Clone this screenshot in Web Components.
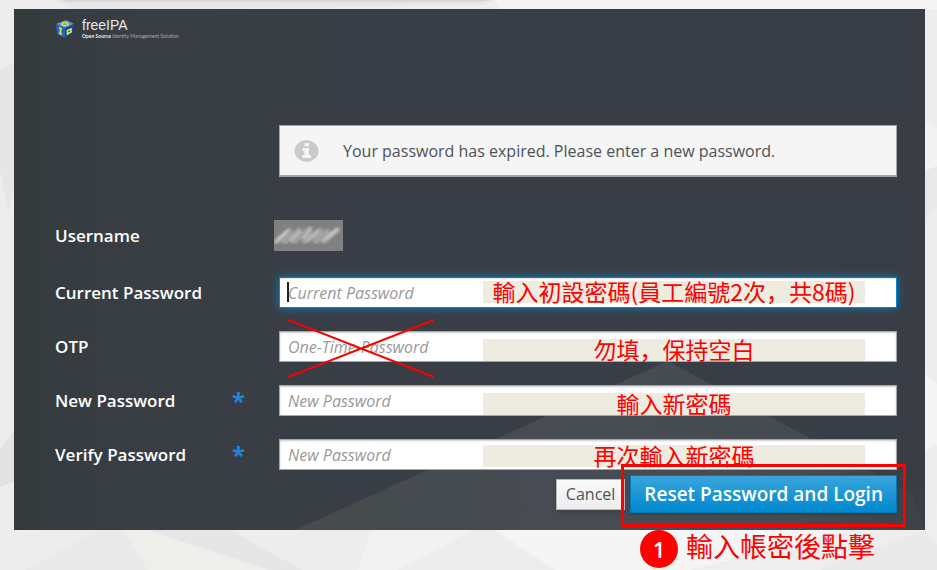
<!DOCTYPE html>
<html lang="zh-Hant">
<head>
<meta charset="utf-8">
<meta name="viewport" content="width=device-width, initial-scale=1">
<title>freeIPA</title>
<style>
  html, body { margin: 0; min-height: 100%; }
  body {
    background: #ececec;
    font-family: "Open Sans", "Noto Sans CJK SC", sans-serif;
    font-size: 16px;
    line-height: 24px;
    color: #fff;
    --red: #fe0000;
    --blue: #0088ce;
  }
</style>
</head>
<body>
<ipa-page>
  <ipa-panel>
    <ipa-logo></ipa-logo>
    <ipa-alert>Your password has expired. Please enter a new password.</ipa-alert>
    <ipa-user label="Username"></ipa-user>
    <ipa-field lang="zh-Hans" label="Current Password" hint="Current Password" active level="high">輸入初設密碼(員工編號2次，共8碼)</ipa-field>
    <ipa-field lang="zh-Hans" label="OTP" hint="One-Time-Password" crossed level="low">勿填，保持空白</ipa-field>
    <ipa-field lang="zh-Hans" label="New Password" hint="New Password" required level="low">輸入新密碼</ipa-field>
    <ipa-field lang="zh-Hans" label="Verify Password" hint="New Password" required>再次輸入新密碼</ipa-field>
    <ipa-actions></ipa-actions>
  </ipa-panel>
  <step-note lang="zh-Hans" number="1">輸入帳密後點擊</step-note>
</ipa-page>

<script>
const define = (name, render) => customElements.define(name, class extends HTMLElement {
  connectedCallback() {
    if (this.shadowRoot) return;
    this.attachShadow({ mode: "open" }).innerHTML = render(this);
  }
});

define("ipa-page", () => `
  <style>
    :host { display: grid; min-height: 100vh; }
    svg, main { grid-area: 1 / 1; }
    svg { width: 100%; height: 100%; min-height: 0; }
    main { z-index: 1; display: flex; flex-direction: column; padding: 9px 12px 0 14px; }
  </style>
  <svg viewBox="0 0 937 570" preserveAspectRatio="none" aria-hidden="true">
    <defs><linearGradient id="s" x2="0" y2="1"><stop stop-color="#d2d2d2"/><stop offset="1" stop-color="#e6e6e6"/></linearGradient></defs>
    <path fill="#ededed" d="M0 0H937V570H0z"/>
    <path fill="#e7e7e7" d="M55 0H495L480 5L200 9H70z"/>
    <path fill="url(#s)" d="M60 0H490L480 3H70z"/>
    <path fill="#f4f4f4" d="M495 0H937V9H500z"/>
    <path fill="#e6e6e6" d="M0 70L14 62V190L8 212L0 170z"/>
    <path fill="#f3f3f3" d="M925 121L937 128V166L925 171z"/>
    <path fill="#e9e9e9" d="M925 171L937 166V207L925 223z"/>
    <path fill="#f4f4f4" d="M925 375L937 384V445L925 451z"/>
    <path fill="#e2e2e0" d="M0 450L14 430V482L0 487z"/>
    <path fill="#e9e9e9" d="M25 570L98 530H123L148 570z"/>
    <path fill="#e6e6e6" d="M147 530H230L302 570H268z"/>
    <path fill="#eeeeeb" d="M123 530H147L268 570H148z"/>
    <path fill="#f2f2f2" d="M372 530H473L397 570H358z"/>
    <path fill="#f5f5f5" d="M495 530H850L690 570H555z"/>
    <path fill="#eee" d="M690 570L850 530H925L937 500V570z"/>
    <path fill="#e9e9e9" d="M820 570L925 530L937 545V570z"/>
  </svg>
  <main><slot></slot></main>`);

define("ipa-panel", () => `
  <style>
    :host { display: grid; }
    svg, form { grid-area: 1 / 1; }
    svg { width: 100%; height: 100%; min-height: 0; }
    form { z-index: 1; display: flex; flex-direction: column; padding: 9px 28px 17px 41px; min-width: 0; }
  </style>
  <svg viewBox="0 0 911 521" preserveAspectRatio="none" aria-hidden="true">
    <defs>
      <linearGradient id="b"><stop stop-color="#343a3c"/><stop offset=".14" stop-color="#393e45"/><stop offset="1" stop-color="#393d45"/></linearGradient>
      <linearGradient id="t" gradientUnits="userSpaceOnUse" x1="280" x2="911" y1="0" y2="0"><stop stop-color="#464b4d"/><stop offset=".4" stop-color="#474b52"/><stop offset=".8" stop-color="#464a51"/><stop offset="1" stop-color="#3d4249"/></linearGradient>
    </defs>
    <path fill="url(#b)" d="M0 0H911V521H0z"/>
    <path fill="url(#t)" d="M281 521L654 352L911 492V521z"/>
    <path fill="#3a3f46" d="M750 404L911 482V521L890 460z"/>
  </svg>
  <form onsubmit="return false"><slot></slot></form>`);

define("ipa-logo", () => `
  <style>
    :host { display: flex; gap: 7px; height: 22px; margin-bottom: 85px; color: #e8eaec; font-family: "Liberation Sans", sans-serif; }
    svg { width: 20px; height: 22px; }
    div { display: flex; flex-direction: column; }
    b { font-weight: 700; }
    .name { font-size: 14px; line-height: 15px; }
    .tag { font: 5px/6px Lato, sans-serif; color: #a7abb0; }
    .tag b { color: #e8eaec; }
  </style>
  <svg viewBox="0 0 20 20" aria-hidden="true">
    <path fill="#5c9ad2" d="M1 5L11 1L19 5L10 9z"/>
    <path fill="#2764b8" d="M1 5L10 9V19L2 15z"/>
    <path fill="#1749a0" d="M10 9L19 5L18 14L10 19z"/>
    <ellipse cx="10" cy="5" rx="3" ry="1.6" fill="none" stroke="#d5e345" stroke-width="1.5"/>
    <path fill="none" stroke="#d5e345" stroke-width="1.7" d="M4 8.500L7 10M5.500 9.500V14.500M4 14L7 15.500M12.500 16V11.500L16 10V13L13 14.500"/>
  </svg>
  <div><span class="name">freeIPA</span><span class="tag"><b>Open Source</b> Identity Management Solution</span></div>`);

define("ipa-alert", () => `
  <style>
    :host { display: flex; align-items: center; gap: 24px; box-sizing: border-box; min-height: 52px; margin: 0 0 43px 224px;
      padding: 0 14px; background: #f5f5f5; border: 1px solid #a3a6a8; border-bottom-width: 2px; color: #4d5258; }
    svg { width: 25px; height: 22px; flex: none; }
  </style>
  <svg viewBox="0 0 25 22" aria-hidden="true">
    <ellipse cx="12.500" cy="11" rx="12" ry="10.700" fill="#cacaca"/>
    <path fill="#f5f5f5" d="M10.500 3H15V6.200H10.500zM8.500 8H15V15H17V18H8.500V15H10.500V11H8.500z"/>
  </svg>
  <span role="status"><slot></slot></span>`);

const rowStyle = `
    :host { display: grid; grid-template-columns: 177px 47px 1fr; align-items: center; height: 31px; margin-bottom: 23px; }
    label, .label { font-size: 17px; font-weight: 600; }`;

define("ipa-user", el => `
  <style>${rowStyle}
    :host { grid-template-columns: 219px 1fr; margin-bottom: 26px; }
    svg { width: 69px; height: 31px; }
  </style>
  <span class="label">${el.getAttribute("label")}</span>
  <svg viewBox="0 0 69 31" role="img" aria-label="hidden">
    <defs><filter id="f"><feGaussianBlur stdDeviation=".9"/></filter></defs>
    <path fill="#808080" d="M0 0H69V31H0z"/>
    <g filter="url(#f)" fill="none" stroke-linecap="round" stroke-linejoin="round">
      <path stroke="#a2a2a2" stroke-width="6" d="M3 21L15 11L11 21L25 11L20 21L35 10L31 21L46 11L42 21L53 12L50 21L63 10"/>
      <path stroke="#bcbcbc" stroke-width="3" d="M2 22L12 13M17 20L25 12M30 18L37 8M34 20L44 11M50 20L63 10"/>
      <path stroke="#d2d2d2" stroke-width="1.5" d="M4 19L14 10M53 17L63 10"/>
    </g>
  </svg>`);

define("ipa-field", el => `
  <style>${rowStyle}
    .req { color: #1f83e0; font-size: 24px; font-weight: 700; line-height: 24px; }
    .box { position: relative; grid-column: 3; height: 31px; }
    input { box-sizing: border-box; width: 100%; height: 100%; margin: 0; padding: 0 8px; border: 1px solid #a4a6a8; border-radius: 0;
      background: #fff; box-shadow: inset 0 1px 2px #0003; font: inherit; color: #333; outline: none; }
    input::placeholder { color: #999; opacity: 1; font-style: italic; }
    :host([active]) input { border-color: var(--blue); box-shadow: inset 0 1px 1px #0002, 0 0 9px #0088cecc; }
    .caret { position: absolute; left: 8px; top: 5px; bottom: 6px; width: 2px; background: #222; }
    .note { position: absolute; left: 33%; right: 32px; top: 6px; height: 22px; background: #eeebe0; color: var(--red);
      font: 23px/20px "Noto Sans CJK SC", sans-serif; text-align: center; white-space: nowrap; }
    :host([level="high"]) .note { top: 4px; }
    :host([level="low"]) .note { top: 8px; }
    .cross { position: absolute; left: 8px; top: -13px; width: 148px; height: 60px; }
  </style>
  <label for="i">${el.getAttribute("label")}</label>
  ${el.hasAttribute("required") ? `<span class="req" aria-hidden="true">*</span>` : ""}
  <div class="box">
    <input id="i" type="password" placeholder="${el.getAttribute("hint")}" ${el.hasAttribute("required") ? "required" : ""}>
    ${el.hasAttribute("active") ? `<span class="caret"></span>` : ""}
    <div class="note"><slot></slot></div>
    ${el.hasAttribute("crossed") ? `<svg class="cross" viewBox="0 0 148 60" aria-hidden="true"><path d="M1 2L147 59M1 59L147 2" stroke="#fe0000" stroke-width="2"/></svg>` : ""}
  </div>`);

define("ipa-actions", () => `
  <style>
    :host { display: flex; justify-content: flex-end; align-items: center; gap: 5px; margin-top: -18px; }
    button { box-sizing: border-box; margin: 0; font: inherit; border-radius: 0; white-space: nowrap; }
    .cancel { height: 31px; padding: 0 9px; border: 1px solid #b7b7b7; color: #4d5258; background: linear-gradient(#fafafa, #ededed); box-shadow: 0 2px 3px #0002; }
    .wrap { position: relative; display: flex; }
    .main { height: 38px; padding: 0 13px; border: 1px solid #0079b8; color: #fff; background: linear-gradient(#39a5dc, #0088ce); font-size: 19px; font-weight: 600; box-shadow: 0 2px 3px #0002; }
    .frame { position: absolute; inset: -11px -9px -14px; border: 3px solid var(--red); pointer-events: none; }
  </style>
  <button class="cancel" type="button">Cancel</button>
  <div class="wrap"><button class="main" type="submit">Reset Password and Login</button><span class="frame"></span></div>`);

define("step-note", el => `
  <style>
    :host { display: flex; justify-content: flex-end; align-items: center; gap: 8px; padding-right: 50px;
      color: var(--red); font: 27px/32px "Noto Sans CJK SC", sans-serif; }
    span { padding-bottom: 6px; }
    b { display: grid; place-items: center; width: 38px; height: 38px; border-radius: 50%; background: var(--red); color: #fff;
      font: 600 22px/38px "Open Sans", sans-serif; }
  </style>
  <b>${el.getAttribute("number")}</b><span><slot></slot></span>`);
</script>
</body>
</html>
